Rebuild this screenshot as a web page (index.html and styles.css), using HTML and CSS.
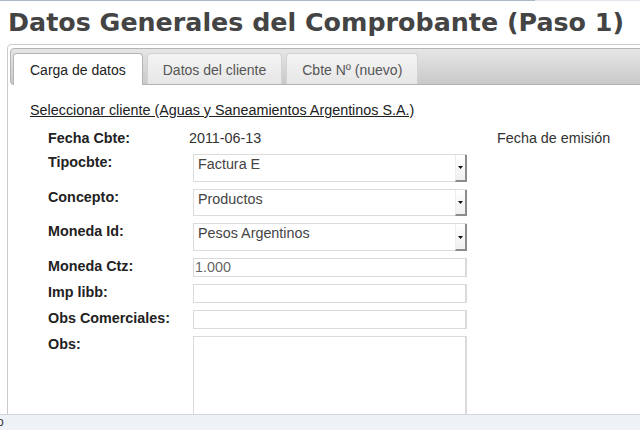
FILE: index.html
```html
<!DOCTYPE html>
<html lang="es">
<head>
<meta charset="utf-8">
<title>Datos Generales del Comprobante</title>
<link rel="stylesheet" href="styles.css">
</head>
<body>
<div class="topline"></div>
<h1 class="title">Datos Generales del Comprobante (Paso 1)</h1>
<div class="tabs">
  <ul class="tabnav">
    <li class="tab active">Carga de datos</li>
    <li class="tab">Datos del cliente</li>
    <li class="tab">Cbte Nº (nuevo)</li>
  </ul>
  <div class="panel">
    <a class="client-link" href="#">Seleccionar cliente (Aguas y Saneamientos Argentinos S.A.)</a>
    <div class="form">
      <div class="label">Fecha Cbte:</div>
      <div class="value">2011-06-13</div>
      <div class="note">Fecha de emisión</div>

      <div class="label">Tipocbte:</div>
      <div class="field"><div class="select"><span class="select-text">Factura E</span><span class="select-btn"><svg width="5" height="3" viewBox="0 0 5 3"><path d="M0 0h5L2.5 3z" fill="#111"/></svg></span></div></div>
      <div></div>

      <div class="label">Concepto:</div>
      <div class="field"><div class="select"><span class="select-text">Productos</span><span class="select-btn"><svg width="5" height="3" viewBox="0 0 5 3"><path d="M0 0h5L2.5 3z" fill="#111"/></svg></span></div></div>
      <div></div>

      <div class="label">Moneda Id:</div>
      <div class="field"><div class="select"><span class="select-text">Pesos Argentinos</span><span class="select-btn"><svg width="5" height="3" viewBox="0 0 5 3"><path d="M0 0h5L2.5 3z" fill="#111"/></svg></span></div></div>
      <div></div>

      <div class="label">Moneda Ctz:</div>
      <div class="field"><div class="input">1.000</div></div>
      <div></div>

      <div class="label">Imp libb:</div>
      <div class="field"><div class="input"></div></div>
      <div></div>

      <div class="label">Obs Comerciales:</div>
      <div class="field"><div class="input"></div></div>
      <div></div>

      <div class="label">Obs:</div>
      <div class="field"><div class="textarea"></div></div>
      <div></div>
    </div>
  </div>
</div>
<div class="statusbar"><span class="status-text">o</span></div>
</body>
</html>
```
FILE: styles.css
```css
html, body {
  margin: 0;
  padding: 0;
  overflow: hidden;
  background: #fff;
}
body {
  font-family: "Liberation Sans", Arial, sans-serif;
  font-size: 14.35px;
  color: #222;
}
.topline {
  height: 1px;
  background: linear-gradient(to right, #a9b9c9 0, #a9b9c9 535px, #e3e8ee 535px);
}
.title {
  margin: 7px 0 7px 8px;
  font-family: "DejaVu Sans", sans-serif;
  font-weight: bold;
  font-size: 25.35px;
  line-height: 29px;
  color: #444;
  white-space: nowrap;
}
.tabs {
  margin-left: 7px;
  width: 700px;
  border: 1px solid #cbcbcb;
  border-radius: 4px;
  padding: 3px 2px 0 2px;
  background: #fff;
}
.tabnav {
  list-style: none;
  margin: 0;
  padding: 3.5px 2px 0 2px;
  display: flex;
  align-items: flex-end;
  border: 1px solid #b4b4b4;
  border-radius: 4px;
  background: linear-gradient(#e6e6e6, #c9c9c9);
}
.tab {
  margin-right: 4px;
  padding: 2px 15px 0 15px;
  height: 28.5px;
  line-height: 28.5px;
  font-size: 14px;
  border: 1px solid #d3d3d3;
  border-bottom: 0;
  border-radius: 4px 4px 0 0;
  background: linear-gradient(#f4f4f4, #e6e6e6);
  color: #555;
  white-space: nowrap;
}
.tab.active {
  padding: 2px 16px 1px 16px;
  background: #fff;
  border-color: #b4b4b4;
  color: #222;
  margin-bottom: -1px;
}
.panel {
  padding: 17px 0 40px 20px;
  height: 400px;
}
.client-link {
  display: block;
  line-height: 16px;
  color: #222;
  text-decoration: underline;
}
.form {
  margin: 12px 0 0 18px;
  display: grid;
  grid-template-columns: 141px 278px auto;
  row-gap: 7px;
  align-items: start;
}
.label {
  font-weight: bold;
  line-height: 17px;
  color: #222;
}
.value {
  line-height: 17px;
  color: #333;
}
.note {
  padding-left: 30px;
  line-height: 17px;
  color: #333;
  white-space: nowrap;
}
.field {
  padding-left: 4px;
}
.select {
  display: flex;
  height: 27.7px;
  box-sizing: border-box;
  border: 1px solid #dcdcdc;
  border-right: 0;
  background: #fff;
}
.select-text {
  flex: 1;
  padding: 1px 4px 0 4px;
  line-height: 17px;
  color: #444;
}
.select-btn {
  width: 9px;
  border-left: 1px solid #ececec;
  border-right: 2px solid #8c8c8c;
  border-bottom: 2px solid #8c8c8c;
  margin-bottom: -1px;
  background: linear-gradient(#fff, #f0f0f0);
  display: flex;
  align-items: center;
  justify-content: center;
  padding-top: 1px;
}
.input {
  height: 19px;
  box-sizing: border-box;
  border: 1px solid #dadada;
  border-right-width: 2px;
  padding-left: 1px;
  line-height: 17px;
  color: #666;
  background: #fff;
}
.textarea {
  height: 110px;
  box-sizing: border-box;
  border: 1px solid #dadada;
  border-right-width: 2px;
  background: #fff;
}
.statusbar {
  position: fixed;
  left: 0;
  right: 0;
  bottom: 0;
  height: 15px;
  border-top: 1px solid #d2d6dc;
  background: #eef1f6;
  font-size: 12px;
  line-height: 15px;
  color: #333;
  overflow: hidden;
}
.status-text {
  margin-left: -3px;
}
```
